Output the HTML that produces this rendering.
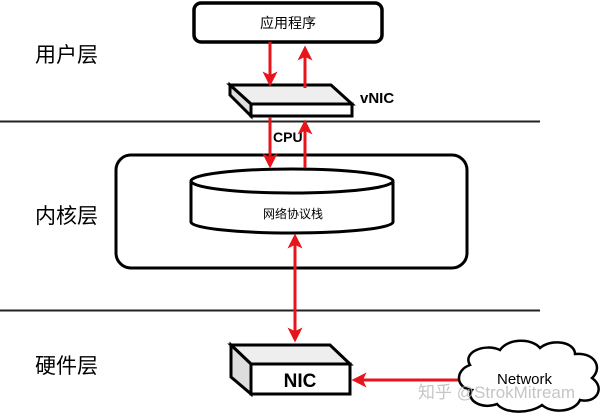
<!DOCTYPE html>
<html><head><meta charset="utf-8"><style>
html,body{margin:0;padding:0;background:#fff;width:613px;height:419px;overflow:hidden}
svg{display:block}
text{font-family:"Liberation Sans","Noto Sans CJK SC",sans-serif}
</style></head><body>
<svg width="613" height="419" viewBox="0 0 613 419" xmlns="http://www.w3.org/2000/svg">
<defs>
<marker id="ah" markerWidth="5" markerHeight="5" refX="3.5" refY="2.5" orient="auto" markerUnits="strokeWidth">
<path d="M0,0 L5,2.5 L0,5 L1.2,2.5 z" fill="#e8141c"/></marker>
</defs>
<line x1="0" y1="121.5" x2="540" y2="121.5" stroke="#222" stroke-width="2"/>
<line x1="0" y1="310.5" x2="540" y2="310.5" stroke="#222" stroke-width="2"/>
<text x="35" y="62" font-size="21">用户层</text>
<text x="35" y="223" font-size="21">内核层</text>
<text x="35" y="373" font-size="21">硬件层</text>
<rect x="194" y="3" width="188" height="39" rx="7" fill="#fff" stroke="#000" stroke-width="3.5"/>
<text x="288" y="28" font-size="14" text-anchor="middle">应用程序</text>
<polygon points="230,85 331,85 352,104 251,104" fill="#eee" stroke="#000" stroke-width="3"/>
<polygon points="230,85 251,104 251,116 230,95" fill="#ddd" stroke="#000" stroke-width="3"/>
<rect x="251" y="104" width="101" height="12" fill="#fff" stroke="#000" stroke-width="3"/>
<text x="360" y="103" font-size="15" font-weight="bold">vNIC</text>
<text x="273" y="142" font-size="14" font-weight="bold">CPU</text>
<line x1="270" y1="42" x2="270" y2="82" stroke="#e8141c" stroke-width="3" marker-end="url(#ah)"/>
<line x1="305" y1="88" x2="305" y2="50" stroke="#e8141c" stroke-width="3" marker-end="url(#ah)"/>
<rect x="116" y="155" width="351" height="113" rx="15" fill="#fff" stroke="#000" stroke-width="3"/>
<path d="M191,181 L191,222 A101,11 0 0 0 393,222 L393,181" fill="#fff" stroke="#000" stroke-width="3"/>
<ellipse cx="292" cy="181" rx="101" ry="12" fill="#fff" stroke="#000" stroke-width="3"/>
<text x="293" y="218" font-size="12" text-anchor="middle">网络协议栈</text>
<line x1="270" y1="117" x2="270" y2="164" stroke="#e8141c" stroke-width="3" marker-end="url(#ah)"/>
<line x1="305" y1="168" x2="305" y2="124" stroke="#e8141c" stroke-width="3" marker-end="url(#ah)"/>
<line x1="295" y1="300" x2="295" y2="238" stroke="#e8141c" stroke-width="3" marker-end="url(#ah)"/>
<line x1="295" y1="280" x2="295" y2="338" stroke="#e8141c" stroke-width="3" marker-end="url(#ah)"/>
<polygon points="231,345 330,345 350,364 251,364" fill="#eee" stroke="#000" stroke-width="3"/>
<polygon points="231,345 251,364 251,394 231,377" fill="#ddd" stroke="#000" stroke-width="3"/>
<rect x="251" y="364" width="99" height="30" fill="#fff" stroke="#000" stroke-width="3"/>
<text x="300" y="387" font-size="19" font-weight="bold" text-anchor="middle">NIC</text>
<line x1="465" y1="380" x2="356" y2="380" stroke="#e8141c" stroke-width="3" marker-end="url(#ah)"/>
<path d="M470,365 C462,352 485,343 500,350 C508,338 532,338 540,348 C552,338 575,342 575,354 C595,352 603,368 592,378 C606,388 596,404 580,400 C575,412 552,414 542,405 C530,414 505,414 497,404 C482,410 465,400 472,390 C455,388 455,370 470,365 Z" fill="#fff" stroke="#000" stroke-width="2.5"/>
<text x="497" y="384" font-size="15">Network</text>
<text x="418" y="398" font-size="17" fill="#bbb" fill-opacity="0.85">知乎 @StrokMitream</text>
</svg>
</body></html>
